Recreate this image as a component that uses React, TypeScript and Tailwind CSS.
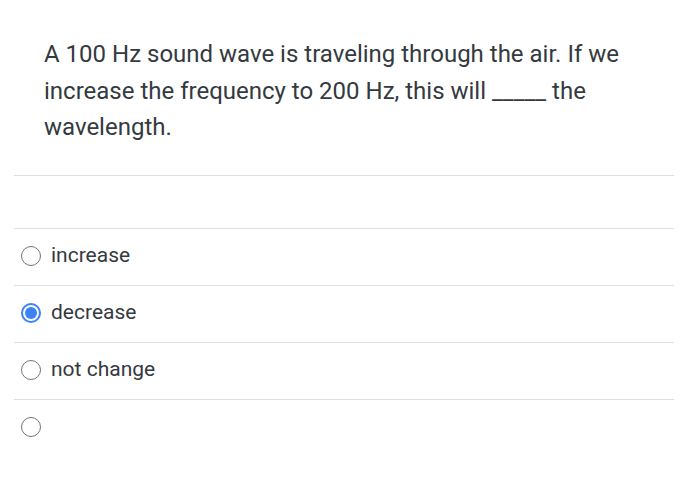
import { useState } from "react";

const options = ["increase", "decrease", "not change", ""];

export default function App() {
  const [picked, setPicked] = useState(1);

  return (
    <div className="min-h-[478px] bg-white pl-[14px] pr-[12px] pt-[36px] font-['Roboto',sans-serif] text-[#343a40]">
      <p className="px-[30px] text-[24px] leading-[36.5px]">
        A 100 Hz sound wave is traveling through the air. If we increase the frequency to 200 Hz,
        this will _____ the wavelength.
      </p>
      <div className="mt-[29px] border-t border-[#e0e0e0]" />
      <ul className="mt-[52px]">
        {options.map((label, i) => (
          <li
            key={i}
            onClick={() => setPicked(i)}
            className="flex h-[57px] cursor-pointer items-center gap-[10px] border-t border-[#e0e0e0] pb-[1px] pl-[7px]"
          >
            {picked === i ? (
              <span className="flex h-[20px] w-[20px] items-center justify-center rounded-full border-2 border-[#3b82f6]">
                <span className="h-[12px] w-[12px] rounded-full bg-[#3b82f6]" />
              </span>
            ) : (
              <span className="h-[20px] w-[20px] rounded-full border-[1.5px] border-[#757575]" />
            )}
            <span className="text-[21px]">{label}</span>
          </li>
        ))}
      </ul>
    </div>
  );
}
